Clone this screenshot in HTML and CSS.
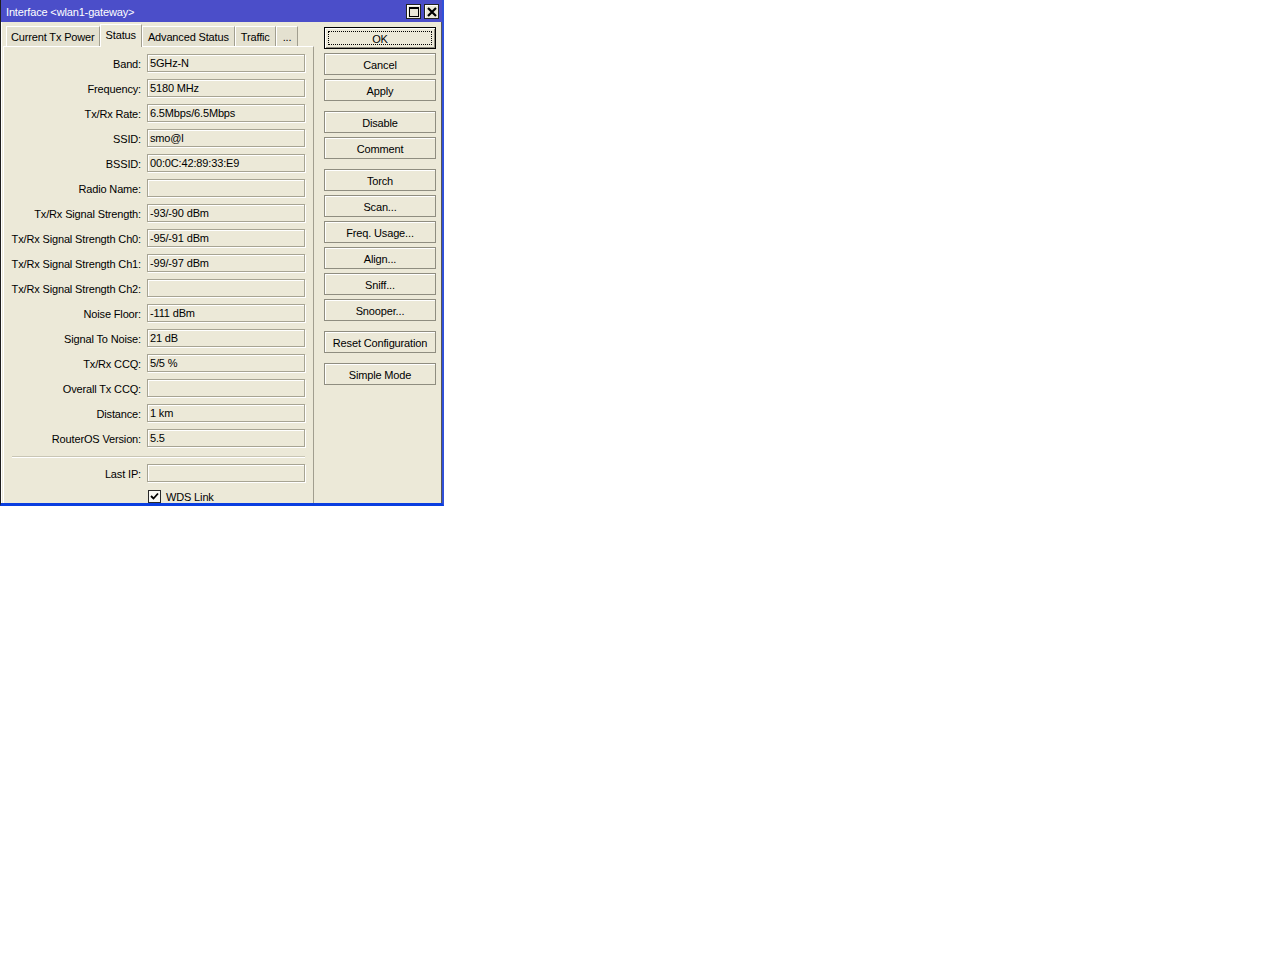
FILE: index.html
```html
<!DOCTYPE html>
<html>
<head>
<meta charset="utf-8">
<title>Interface</title>
<link rel="stylesheet" href="styles.css">
</head>
<body>
<div class="window">
  <div class="titlebar">
    <span class="title">Interface &lt;wlan1-gateway&gt;</span>
    <div class="tbtns">
      <span class="tbtn"><svg width="10" height="10" viewBox="0 0 10 10"><rect x="0.5" y="0.5" width="9" height="9" fill="none" stroke="#000"/><rect x="0" y="0" width="10" height="2" fill="#000"/></svg></span>
      <span class="tbtn"><svg width="10" height="10" viewBox="0 0 10 10"><path d="M1 1 L9 9 M9 1 L1 9" stroke="#000" stroke-width="2.2"/></svg></span>
    </div>
  </div>
  <div class="content">
    <div class="leftcol">
      <div class="tabs">
        <div class="tab first">Current Tx Power</div>
        <div class="tab active">Status</div>
        <div class="tab">Advanced Status</div>
        <div class="tab">Traffic</div>
        <div class="tab more">...</div>
      </div>
      <div class="panel">
        <div class="form">
          <label>Band:</label><div class="field">5GHz-N</div>
          <label>Frequency:</label><div class="field">5180 MHz</div>
          <label>Tx/Rx Rate:</label><div class="field">6.5Mbps/6.5Mbps</div>
          <label>SSID:</label><div class="field">smo@l</div>
          <label>BSSID:</label><div class="field">00:0C:42:89:33:E9</div>
          <label>Radio Name:</label><div class="field"></div>
          <label>Tx/Rx Signal Strength:</label><div class="field">-93/-90 dBm</div>
          <label>Tx/Rx Signal Strength Ch0:</label><div class="field">-95/-91 dBm</div>
          <label>Tx/Rx Signal Strength Ch1:</label><div class="field">-99/-97 dBm</div>
          <label>Tx/Rx Signal Strength Ch2:</label><div class="field"></div>
          <label>Noise Floor:</label><div class="field">-111 dBm</div>
          <label>Signal To Noise:</label><div class="field">21 dB</div>
          <label>Tx/Rx CCQ:</label><div class="field">5/5 %</div>
          <label>Overall Tx CCQ:</label><div class="field"></div>
          <label>Distance:</label><div class="field">1 km</div>
          <label>RouterOS Version:</label><div class="field">5.5</div>
          <div class="sep"></div>
          <label>Last IP:</label><div class="field"></div>
          <div class="blank"></div>
          <div class="check"><span class="cbox"><svg width="9" height="9" viewBox="0 0 9 9"><path d="M1 4 L3.5 6.5 L8 1.5" fill="none" stroke="#000" stroke-width="1.8"/></svg></span><span>WDS Link</span></div>
        </div>
      </div>
    </div>
    <div class="buttons">
      <div class="group">
        <div class="btn default">OK</div>
        <div class="btn">Cancel</div>
        <div class="btn">Apply</div>
      </div>
      <div class="group">
        <div class="btn">Disable</div>
        <div class="btn">Comment</div>
      </div>
      <div class="group">
        <div class="btn">Torch</div>
        <div class="btn">Scan...</div>
        <div class="btn">Freq. Usage...</div>
        <div class="btn">Align...</div>
        <div class="btn">Sniff...</div>
        <div class="btn">Snooper...</div>
      </div>
      <div class="group">
        <div class="btn">Reset Configuration</div>
      </div>
      <div class="group">
        <div class="btn">Simple Mode</div>
      </div>
    </div>
  </div>
</div>
</body>
</html>
```
FILE: styles.css
```css
html, body {
  margin: 0;
  padding: 0;
  background: #ffffff;
}
body {
  font-family: "Liberation Sans", Arial, sans-serif;
  font-size: 11px;
  letter-spacing: -0.15px;
  color: #000;
}
.window {
  width: 444px;
  height: 506px;
  box-sizing: border-box;
  border-left: 1px solid #1e1e1e;
  border-right: 2px solid #3050d8;
  border-bottom: 3px solid #0a3ee0;
  display: flex;
  flex-direction: column;
  background: #ece9d8;
}
.titlebar {
  height: 22px;
  flex: none;
  background: #4b4ec9;
  display: flex;
  align-items: center;
  justify-content: space-between;
  padding: 0 3px 0 5px;
  color: #fff;
}
.title {
  font-size: 11px;
  margin-top: 2px;
}
.tbtns {
  display: flex;
  gap: 3px;
  margin-top: 1px;
}
.tbtn {
  width: 13px;
  height: 13px;
  background: #ece9d8;
  border: 1px solid #222;
  box-shadow: inset 1px 1px 0 #fff;
  display: flex;
  align-items: center;
  justify-content: center;
}
.content {
  flex: 1;
  display: flex;
  box-shadow: inset 1px 0 0 #fff;
  border-right: 1px solid #555;
  min-height: 0;
}
.leftcol {
  width: 311px;
  margin-left: 2px;
  padding-top: 2px;
  display: flex;
  flex-direction: column;
}
.tabs {
  display: flex;
  align-items: flex-end;
  height: 22px;
  padding-left: 3px;
  position: relative;
  z-index: 1;
}
.tab {
  height: 19px;
  line-height: 20px;
  padding: 0 5px;
  background: #e4e1d0;
  border-top: 1px solid #fff;
  border-left: 1px solid #fff;
  border-right: 1px solid #a19e8f;
  white-space: nowrap;
}
.tab.first {
  padding: 0 4px;
}
.tab.more {
  padding: 0 6px;
}
.tab.active {
  height: 22px;
  line-height: 20px;
  background: #ece9d8;
  margin-bottom: -1px;
  padding: 0 5px;
}
.panel {
  flex: 1;
  border-top: 1px solid #fff;
  border-left: 1px solid #fff;
  border-right: 1px solid #a19e8f;
  padding-top: 7px;
}
.form {
  display: grid;
  grid-template-columns: 143px 158px;
  row-gap: 7px;
  align-items: center;
}
.form label {
  text-align: right;
  padding-right: 6px;
  padding-top: 1px;
  white-space: nowrap;
}
.field {
  height: 18px;
  box-sizing: border-box;
  border: 1px solid #a7a493;
  box-shadow: 1px 1px 0 #fff, inset 1px 1px 0 #fff;
  padding-left: 2px;
  line-height: 17px;
  white-space: nowrap;
}
.sep {
  grid-column: 1 / 3;
  margin: 2px 0 -1px 8px;
  height: 1px;
  background: #c9c6b5;
  border-bottom: 1px solid #fff;
}
.blank {
  height: 13px;
}
.check {
  display: flex;
  align-items: center;
  gap: 5px;
  height: 13px;
  margin-left: 1px;
  padding-top: 1px;
}
.cbox {
  width: 11px;
  height: 11px;
  border: 1px solid #2a2a2a;
  background: #f8f8f4;
  display: flex;
  align-items: center;
  justify-content: center;
}
.buttons {
  margin-left: 10px;
  padding-top: 5px;
  width: 112px;
  display: flex;
  flex-direction: column;
  gap: 10px;
}
.group {
  display: flex;
  flex-direction: column;
  gap: 4px;
}
.btn {
  height: 22px;
  box-sizing: border-box;
  border: 1px solid #8f8d80;
  box-shadow: inset 1px 1px 0 #fff;
  background: #ece9d8;
  display: flex;
  align-items: center;
  justify-content: center;
  padding-top: 2px;
  white-space: nowrap;
  position: relative;
}
.btn.default {
  border: 1px solid #000;
  box-shadow: inset 1px 1px 0 #fff, inset -1px -1px 0 #8f8d80;
}
.btn.default::after {
  content: "";
  position: absolute;
  left: 3px;
  top: 3px;
  right: 3px;
  bottom: 3px;
  border: 1px dotted #000;
}
```
